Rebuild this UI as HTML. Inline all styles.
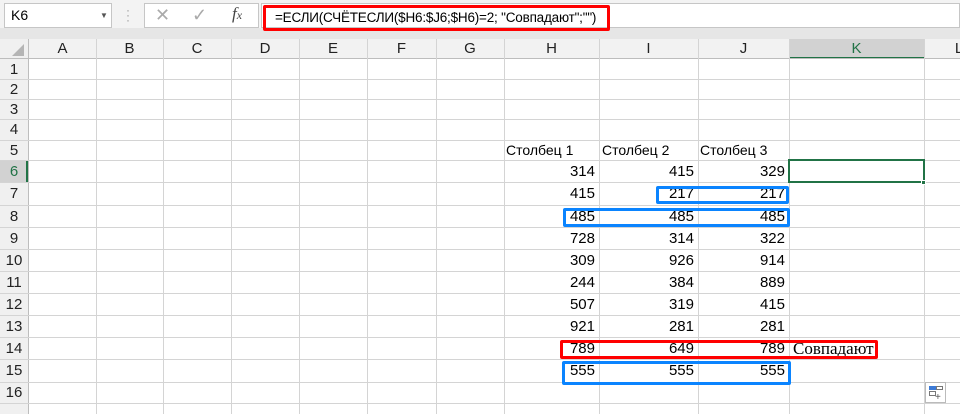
<!DOCTYPE html>
<html><head><meta charset="utf-8"><style>
body{margin:0;width:960px;height:414px;overflow:hidden;background:#fff;font-family:"Liberation Sans",sans-serif;position:relative}
div{position:absolute;box-sizing:border-box}
.vl{width:1px;background:#d4d4d4}
.hl{height:1px;background:#d4d4d4}
.ch{top:39px;height:20px;font-size:15px;color:#222;text-align:center;line-height:20px}
.rh{left:0;width:28px;font-size:15px;color:#222;text-align:center}
.n{font-size:15px;color:#000;text-align:right;padding-right:4px}
</style></head><body>
<div style="left:0;top:0;width:960px;height:39px;background:#e6e6e6"></div>
<div style="left:0;top:0;width:960px;height:28px;background:#f3f3f3"></div>
<div style="left:4px;top:3px;width:108px;height:25px;background:#fff;border:1px solid #c6c6c6;font-size:14px;line-height:23px;padding-left:6px">K6<span style="position:absolute;left:95px;top:0;font-size:8px;color:#555">▼</span></div>
<div style="left:126px;top:8px;width:2px;height:16px;color:#999;font-size:12px;line-height:5px">·<br>·<br>·</div>
<div style="left:144px;top:3px;width:115px;height:25px;background:#fff;border:1px solid #c6c6c6"></div>
<div style="left:155px;top:5px;font-size:18px;color:#aaa">✕</div>
<div style="left:192px;top:5px;font-size:18px;color:#aaa">✓</div>
<div style="left:232px;top:4px;font-size:17px;color:#444;font-family:'Liberation Serif',serif;font-style:italic">f<span style="font-size:12px">x</span></div>
<div style="left:261px;top:3px;width:699px;height:25px;background:#fff;border:1px solid #c6c6c6"></div>
<div style="left:263px;top:5px;width:347px;height:26px;border:3px solid #f00;border-radius:2px;font-size:13.5px;line-height:19px;padding-left:9px;white-space:nowrap;letter-spacing:-0.2px">=ЕСЛИ(СЧЁТЕСЛИ($H6:$J6;$H6)=2; "Совпадают";"")</div>

<div style="left:0;top:39px;width:960px;height:20px;background:#f2f2f2"></div>
<div style="left:0;top:39px;width:28px;height:375px;background:#f0f0f0"></div>
<div style="left:789px;top:39px;width:135px;height:20px;background:#d2d2d2;border-bottom:2px solid #217346"></div>
<div style="left:0;top:160px;width:28px;height:22px;background:#d2d2d2;border-right:2px solid #217346"></div>
<div style="left:12px;top:44px;width:0;height:0;border-left:12px solid transparent;border-bottom:12px solid #b5b5b5"></div>
<div class="hl" style="left:0;top:58px;width:960px;background:#bdbdbd"></div>
<div class="vl" style="left:28px;top:39px;height:375px;background:#bdbdbd"></div>

<div class="vl" style="left:96px;top:39px;height:375px"></div>
<div class="vl" style="left:163px;top:39px;height:375px"></div>
<div class="vl" style="left:231px;top:39px;height:375px"></div>
<div class="vl" style="left:299px;top:39px;height:375px"></div>
<div class="vl" style="left:367px;top:39px;height:375px"></div>
<div class="vl" style="left:436px;top:39px;height:375px"></div>
<div class="vl" style="left:504px;top:39px;height:375px"></div>
<div class="vl" style="left:599px;top:39px;height:375px"></div>
<div class="vl" style="left:698px;top:39px;height:375px"></div>
<div class="vl" style="left:789px;top:39px;height:375px"></div>
<div class="vl" style="left:924px;top:39px;height:375px"></div>

<div class="hl" style="left:0;top:79px;width:960px"></div>
<div class="hl" style="left:0;top:99px;width:960px"></div>
<div class="hl" style="left:0;top:119px;width:960px"></div>
<div class="hl" style="left:0;top:140px;width:960px"></div>
<div class="hl" style="left:0;top:160px;width:960px"></div>
<div class="hl" style="left:0;top:182px;width:960px"></div>
<div class="hl" style="left:0;top:205px;width:960px"></div>
<div class="hl" style="left:0;top:227px;width:960px"></div>
<div class="hl" style="left:0;top:249px;width:960px"></div>
<div class="hl" style="left:0;top:271px;width:960px"></div>
<div class="hl" style="left:0;top:293px;width:960px"></div>
<div class="hl" style="left:0;top:315px;width:960px"></div>
<div class="hl" style="left:0;top:337px;width:960px"></div>
<div class="hl" style="left:0;top:359px;width:960px"></div>
<div class="hl" style="left:0;top:382px;width:960px"></div>
<div class="hl" style="left:0;top:403px;width:960px"></div>

<div class="ch" style="left:29px;width:67px">A</div>
<div class="ch" style="left:96px;width:67px">B</div>
<div class="ch" style="left:163px;width:68px">C</div>
<div class="ch" style="left:231px;width:68px">D</div>
<div class="ch" style="left:299px;width:68px">E</div>
<div class="ch" style="left:367px;width:69px">F</div>
<div class="ch" style="left:436px;width:68px">G</div>
<div class="ch" style="left:504px;width:95px">H</div>
<div class="ch" style="left:599px;width:99px">I</div>
<div class="ch" style="left:698px;width:91px">J</div>
<div class="ch" style="left:789px;width:135px;color:#217346">K</div>
<div class="ch" style="left:924px;width:70px">L</div>

<div class="rh" style="top:60px;line-height:19px">1</div>
<div class="rh" style="top:80px;line-height:19px">2</div>
<div class="rh" style="top:100px;line-height:19px">3</div>
<div class="rh" style="top:120px;line-height:20px">4</div>
<div class="rh" style="top:141px;line-height:19px">5</div>
<div class="rh" style="top:161px;line-height:21px;color:#217346">6</div>
<div class="rh" style="top:183px;line-height:22px">7</div>
<div class="rh" style="top:206px;line-height:21px">8</div>
<div class="rh" style="top:228px;line-height:21px">9</div>
<div class="rh" style="top:250px;line-height:21px">10</div>
<div class="rh" style="top:272px;line-height:21px">11</div>
<div class="rh" style="top:294px;line-height:21px">12</div>
<div class="rh" style="top:316px;line-height:21px">13</div>
<div class="rh" style="top:338px;line-height:21px">14</div>
<div class="rh" style="top:360px;line-height:22px">15</div>
<div class="rh" style="top:383px;line-height:20px">16</div>

<div style="left:506px;top:141px;font-size:14px;line-height:19px">Столбец 1</div>
<div style="left:602px;top:141px;font-size:14px;line-height:19px">Столбец 2</div>
<div style="left:700px;top:141px;font-size:14px;line-height:19px">Столбец 3</div>

<div class="n" style="left:504px;top:161px;width:95px;line-height:21px">314</div><div class="n" style="left:599px;top:161px;width:99px;line-height:21px">415</div><div class="n" style="left:698px;top:161px;width:91px;line-height:21px">329</div>
<div class="n" style="left:504px;top:183px;width:95px;line-height:22px">415</div><div class="n" style="left:599px;top:183px;width:99px;line-height:22px">217</div><div class="n" style="left:698px;top:183px;width:91px;line-height:22px">217</div>
<div class="n" style="left:504px;top:206px;width:95px;line-height:21px">485</div><div class="n" style="left:599px;top:206px;width:99px;line-height:21px">485</div><div class="n" style="left:698px;top:206px;width:91px;line-height:21px">485</div>
<div class="n" style="left:504px;top:228px;width:95px;line-height:21px">728</div><div class="n" style="left:599px;top:228px;width:99px;line-height:21px">314</div><div class="n" style="left:698px;top:228px;width:91px;line-height:21px">322</div>
<div class="n" style="left:504px;top:250px;width:95px;line-height:21px">309</div><div class="n" style="left:599px;top:250px;width:99px;line-height:21px">926</div><div class="n" style="left:698px;top:250px;width:91px;line-height:21px">914</div>
<div class="n" style="left:504px;top:272px;width:95px;line-height:21px">244</div><div class="n" style="left:599px;top:272px;width:99px;line-height:21px">384</div><div class="n" style="left:698px;top:272px;width:91px;line-height:21px">889</div>
<div class="n" style="left:504px;top:294px;width:95px;line-height:21px">507</div><div class="n" style="left:599px;top:294px;width:99px;line-height:21px">319</div><div class="n" style="left:698px;top:294px;width:91px;line-height:21px">415</div>
<div class="n" style="left:504px;top:316px;width:95px;line-height:21px">921</div><div class="n" style="left:599px;top:316px;width:99px;line-height:21px">281</div><div class="n" style="left:698px;top:316px;width:91px;line-height:21px">281</div>
<div class="n" style="left:504px;top:338px;width:95px;line-height:21px">789</div><div class="n" style="left:599px;top:338px;width:99px;line-height:21px">649</div><div class="n" style="left:698px;top:338px;width:91px;line-height:21px">789</div>
<div class="n" style="left:504px;top:360px;width:95px;line-height:22px">555</div><div class="n" style="left:599px;top:360px;width:99px;line-height:22px">555</div><div class="n" style="left:698px;top:360px;width:91px;line-height:22px">555</div>
<div style="left:793px;top:338px;font-size:17px;line-height:21px;font-family:'Liberation Serif',serif">Совпадают</div>

<div style="left:788px;top:159px;width:137px;height:24px;border:2px solid #217346"></div>
<div style="left:921px;top:180px;width:5px;height:5px;background:#217346;border:1px solid #fff"></div>

<div style="left:656px;top:186px;width:133px;height:18px;border:3px solid #0a84ff;border-radius:2px"></div>
<div style="left:563px;top:208px;width:227px;height:19px;border:3px solid #0a84ff;border-radius:2px"></div>
<div style="left:560px;top:340px;width:318px;height:19px;border:3px solid #f00;border-radius:2px"></div>
<div style="left:562px;top:361px;width:229px;height:24px;border:3px solid #0a84ff;border-radius:2px"></div>

<div style="left:925px;top:382px;width:21px;height:21px;background:#fff;border:1px solid #bbb"></div>
<div style="left:929px;top:386px;width:7px;height:4px;background:#3c7ad6"></div>
<div style="left:936px;top:386px;width:7px;height:4px;border:1px solid #777"></div>
<div style="left:929px;top:391px;width:7px;height:5px;border:1px solid #777"></div>
<div style="left:935px;top:393px;font-size:10px;line-height:10px;color:#555">+</div>
</body></html>
